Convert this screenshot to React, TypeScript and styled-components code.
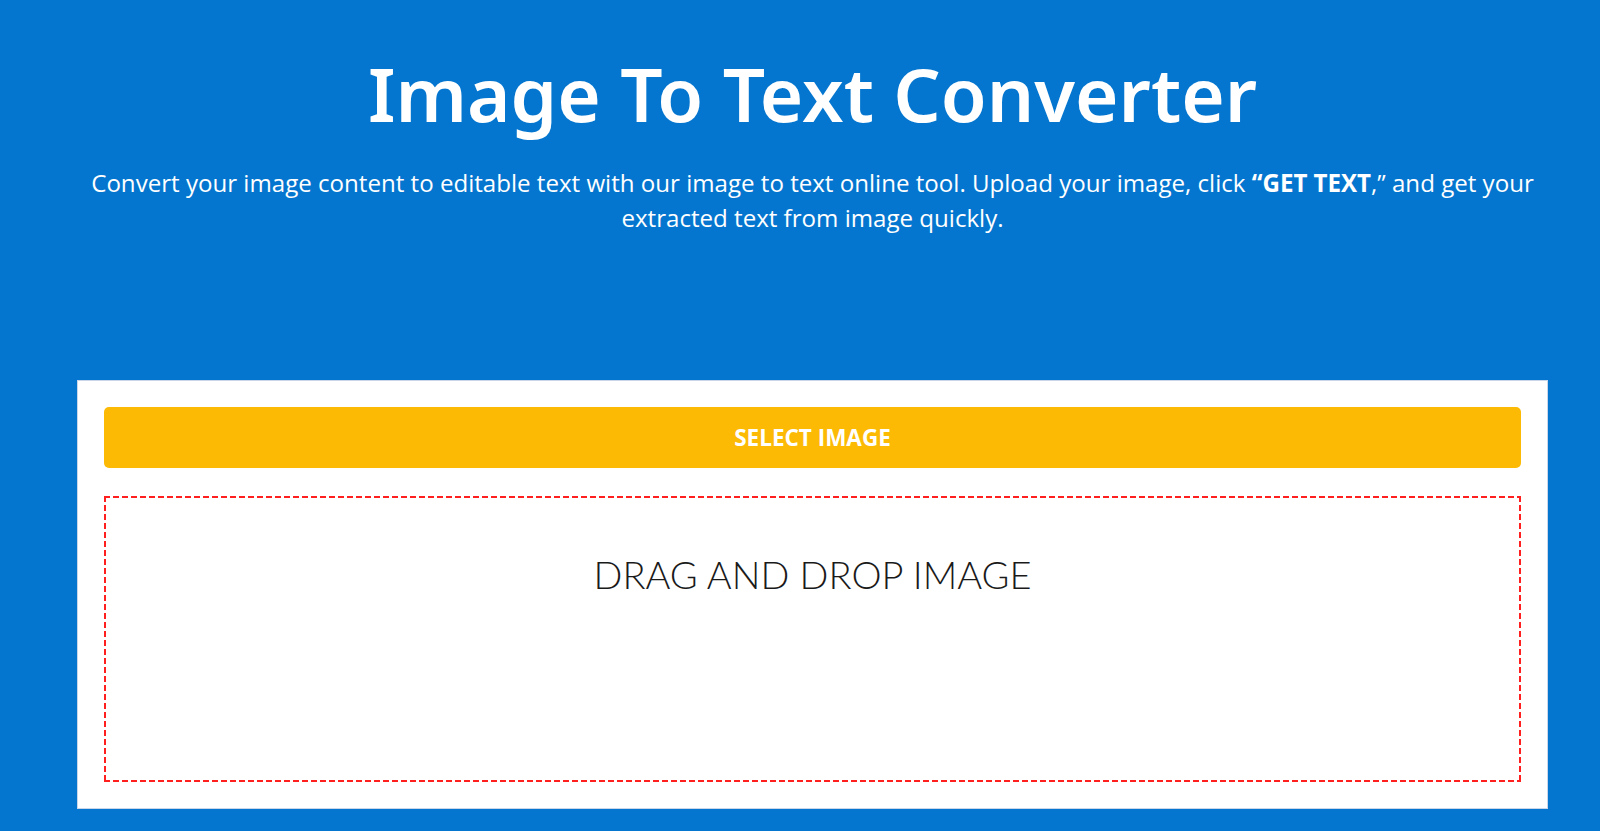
import React from "react";
import styled, { createGlobalStyle } from "styled-components";

const GlobalStyle = createGlobalStyle`
  html, body {
    margin: 0;
    padding: 0;
    background: #0476cf;
  }
  * { box-sizing: border-box; }
`;

const Page = styled.div`
  min-height: 831px;
  background: #0476cf;
  overflow: hidden;
`;

const Container = styled.div`
  width: 1471px;
  margin-left: 77px;
  display: flex;
  flex-direction: column;
  align-items: center;
`;

const Title = styled.h1`
  margin: 49px 0 0;
  font-family: "Noto Sans", sans-serif;
  font-weight: 600;
  font-size: 74.5px;
  line-height: 88px;
  color: #ffffff;
  text-align: center;
`;

const Subtitle = styled.p`
  margin: 28px 0 0;
  width: 1471px;
  font-family: "Open Sans", sans-serif;
  font-weight: 400;
  font-size: 24.1px;
  line-height: 35px;
  color: #ffffff;
  text-align: center;
  b { font-weight: 700; }
`;

const Card = styled.div`
  margin-top: 145px;
  width: 1471px;
  background: #ffffff;
  border: 1px solid #c9d6ea;
  padding: 26px;
  display: flex;
  flex-direction: column;
  gap: 28px;
`;

const SelectButton = styled.button`
  height: 61px;
  width: 100%;
  border: none;
  border-radius: 5px;
  background: #fcba04;
  color: #ffffff;
  font-family: "Open Sans", sans-serif;
  font-weight: 700;
  font-size: 22.5px;
  text-transform: uppercase;
  cursor: pointer;
`;

const dash = "#ff1f1f";

const DropZone = styled.div`
  height: 286px;
  display: flex;
  justify-content: center;
  padding-top: 56px;
  background:
    linear-gradient(to right, ${dash} 6px, transparent 6px) top left / 9px 2px repeat-x,
    linear-gradient(to right, ${dash} 6px, transparent 6px) bottom left / 9px 2px repeat-x,
    linear-gradient(to bottom, ${dash} 6px, transparent 6px) top left / 2px 9px repeat-y,
    linear-gradient(to bottom, ${dash} 6px, transparent 6px) top right / 2px 9px repeat-y;
`;

const DropText = styled.div`
  font-family: "Lato", sans-serif;
  font-weight: 300;
  font-size: 38px;
  line-height: 44px;
  color: #1a1a1a;
`;

export default function App() {
  return (
    <Page>
      <GlobalStyle />
      <Container>
        <Title>Image To Text Converter</Title>
        <Subtitle>
          Convert your image content to editable text with our image to text online tool. Upload your image, click <b>“GET TEXT</b>,” and get your extracted text from image quickly.
        </Subtitle>
        <Card>
          <SelectButton>Select Image</SelectButton>
          <DropZone>
            <DropText>DRAG AND DROP IMAGE</DropText>
          </DropZone>
        </Card>
      </Container>
    </Page>
  );
}
